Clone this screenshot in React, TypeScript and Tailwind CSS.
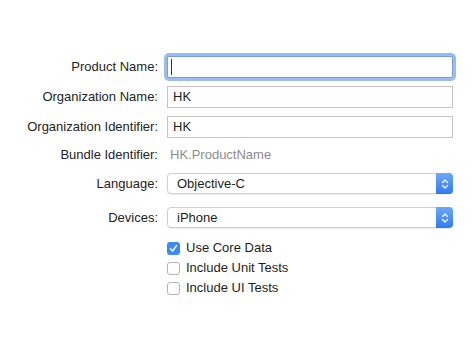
import React from "react";

const font = { fontFamily: '"Liberation Sans", Arial, sans-serif' };

function Label({ children }: { children: React.ReactNode }) {
  return (
    <div className="w-[158px] shrink-0 text-right text-[13px] text-[#242424]">
      {children}
    </div>
  );
}

function TextField({ value, focused }: { value?: string; focused?: boolean }) {
  return (
    <div
      className={
        focused
          ? "ml-[9px] flex h-[22px] w-[286px] items-center rounded-[2px] border border-[#6f9fe0] bg-white pl-[3px] shadow-[0_0_0_3px_rgba(120,165,232,0.75)]"
          : "ml-[9px] flex h-[22px] w-[286px] items-center border border-[#c4c4c4] bg-white pl-[5px] text-[13px] text-[#1e1e1e]"
      }
    >
      {focused ? <div className="h-[16px] w-px bg-[#333]" /> : value}
    </div>
  );
}

function Popup({ value }: { value: string }) {
  return (
    <div className="ml-[9px] flex h-[21px] w-[286px] items-stretch rounded-[4px] border border-[#d0d0d0] bg-white shadow-[0_1px_1px_rgba(0,0,0,0.08)]">
      <div className="flex flex-1 items-center pl-[9px] text-[13px] text-[#1e1e1e]">{value}</div>
      <div className="-my-px -mr-px flex w-[17px] items-center justify-center rounded-r-[4px] bg-gradient-to-b from-[#6aa9f8] to-[#2f7bf1]">
        <svg width="8" height="12" viewBox="0 0 8 12" fill="none">
          <path d="M1.5 4.5 L4 2 L6.5 4.5" stroke="white" strokeWidth="1.3" strokeLinecap="round" strokeLinejoin="round" />
          <path d="M1.5 7.5 L4 10 L6.5 7.5" stroke="white" strokeWidth="1.3" strokeLinecap="round" strokeLinejoin="round" />
        </svg>
      </div>
    </div>
  );
}

function Check({ label, checked }: { label: string; checked?: boolean }) {
  return (
    <div className="flex h-[20px] items-center pl-[167px]">
      {checked ? (
        <div className="flex h-[13px] w-[13px] items-center justify-center rounded-[3px] bg-[#3d8af4]">
          <svg width="9" height="9" viewBox="0 0 9 9" fill="none">
            <path d="M1.5 4.8 L3.6 7 L7.6 1.5" stroke="white" strokeWidth="1.4" strokeLinecap="round" strokeLinejoin="round" />
          </svg>
        </div>
      ) : (
        <div className="h-[13px] w-[13px] rounded-[3px] border border-[#b4b4b4] bg-white" />
      )}
      <span className="ml-[6px] text-[13px] text-[#1e1e1e]">{label}</span>
    </div>
  );
}

export default function App() {
  return (
    <div className="h-[345px] w-[474px] bg-white pt-[56px]" style={font}>
      <div className="flex h-[22px] items-center">
        <Label>Product Name:</Label>
        <TextField focused />
      </div>
      <div className="mt-[8px] flex h-[22px] items-center">
        <Label>Organization Name:</Label>
        <TextField value="HK" />
      </div>
      <div className="mt-[8px] flex h-[22px] items-center">
        <Label>Organization Identifier:</Label>
        <TextField value="HK" />
      </div>
      <div className="mt-[8px] flex h-[18px] items-center">
        <Label>Bundle Identifier:</Label>
        <div className="ml-[12px] text-[13px] text-[#8c8c8c]">HK.ProductName</div>
      </div>
      <div className="mt-[9px] flex h-[21px] items-center">
        <Label>Language:</Label>
        <Popup value="Objective-C" />
      </div>
      <div className="mt-[13px] flex h-[21px] items-center">
        <Label>Devices:</Label>
        <Popup value="iPhone" />
      </div>
      <div className="mt-[10px]">
        <Check label="Use Core Data" checked />
        <Check label="Include Unit Tests" />
        <Check label="Include UI Tests" />
      </div>
    </div>
  );
}
